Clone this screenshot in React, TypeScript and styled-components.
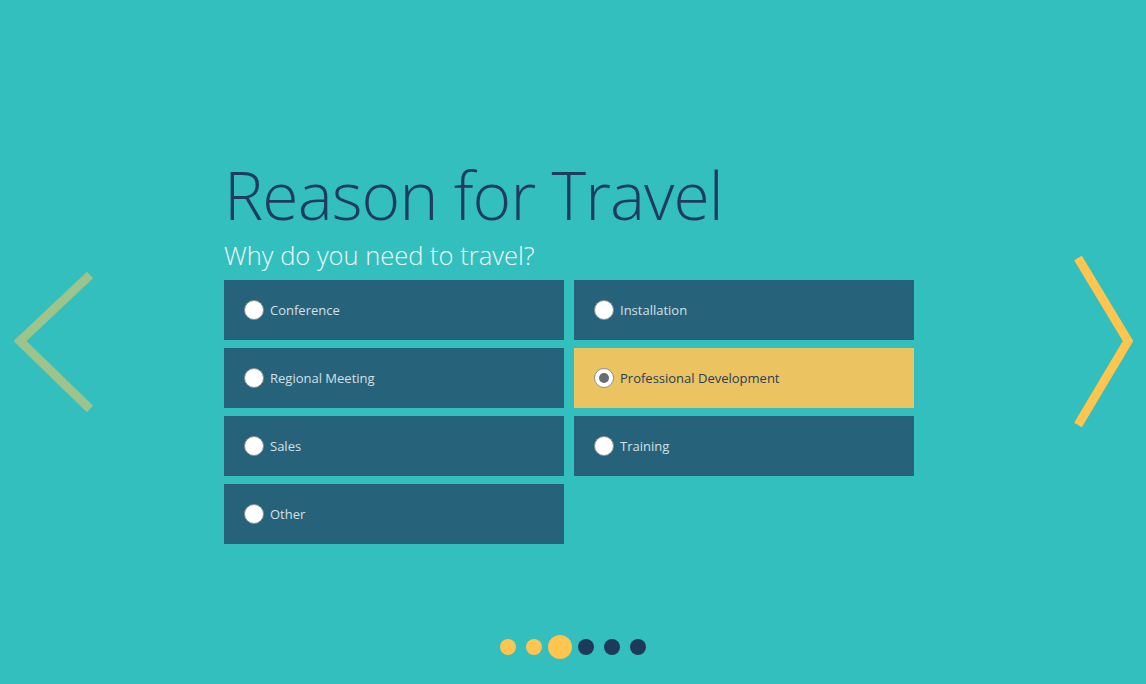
import React, { useState } from "react";
import styled, { createGlobalStyle } from "styled-components";

const Global = createGlobalStyle`
  html, body { margin: 0; padding: 0; }
  body { background: #34bfbf; font-family: "Open Sans", "Noto Sans", sans-serif; }
`;

const Page = styled.div`
  position: relative;
  width: 1146px;
  height: 684px;
  background: #34bfbf;
  display: flex;
  flex-direction: column;
  overflow: hidden;
`;

const Slide = styled.main`
  flex: 1;
  padding: 148px 0 0 224px;
  display: flex;
  flex-direction: column;
`;

const Title = styled.h1`
  margin: 0;
  font-family: "Open Sans", sans-serif;
  font-weight: 300;
  font-size: 66px;
  line-height: 92px;
  color: #1e3d5c;
  letter-spacing: -0.9px;
`;

const Subtitle = styled.h2`
  margin: 0 0 10px;
  font-family: "Open Sans", sans-serif;
  font-weight: 300;
  font-size: 25.5px;
  line-height: 30px;
  color: #eef6f6;
`;

const Grid = styled.div`
  display: grid;
  grid-template-columns: 340px 340px;
  grid-auto-rows: 60px;
  column-gap: 10px;
  row-gap: 8px;
`;

const Option = styled.label<{ $selected: boolean }>`
  display: flex;
  align-items: center;
  gap: 6px;
  padding-left: 20px;
  background: ${(p) => (p.$selected ? "#ebc461" : "#26627a")};
  color: ${(p) => (p.$selected ? "#233f5c" : "#d3e0e5")};
  font-size: 13px;
  cursor: pointer;
`;

const Radio = styled.span<{ $selected: boolean }>`
  box-sizing: border-box;
  width: 20px;
  height: 20px;
  border-radius: 50%;
  background: #ffffff;
  border: 1px solid #8a8f93;
  display: flex;
  align-items: center;
  justify-content: center;
  &::after {
    content: "";
    width: 10px;
    height: 10px;
    border-radius: 50%;
    background: #636e75;
    display: ${(p) => (p.$selected ? "block" : "none")};
  }
`;

const Arrow = styled.button<{ $side: "left" | "right" }>`
  position: absolute;
  ${(p) => (p.$side === "left" ? "left: 8px; top: 268px;" : "left: 1070px; top: 252px;")}
  border: 0;
  padding: 0;
  background: none;
  cursor: pointer;
  svg { display: block; }
`;

const Dots = styled.nav`
  display: flex;
  justify-content: center;
  align-items: center;
  height: 24px;
  padding-bottom: 25px;
`;

const DotSlot = styled.span`
  width: 26px;
  display: flex;
  justify-content: center;
`;

const Dot = styled.span<{ $active: boolean; $done: boolean }>`
  width: ${(p) => (p.$active ? 24 : 16)}px;
  height: ${(p) => (p.$active ? 24 : 16)}px;
  border-radius: 50%;
  background: ${(p) => (p.$active || p.$done ? "#ffc54f" : "#1e3a5a")};
`;

const options = [
  "Conference",
  "Installation",
  "Regional Meeting",
  "Professional Development",
  "Sales",
  "Training",
  "Other",
];

export default function App() {
  const [selected, setSelected] = useState("Professional Development");
  const current = 2;
  return (
    <Page>
      <Global />
      <Arrow $side="left" aria-label="Previous">
        <svg width="90" height="148" viewBox="0 0 90 148">
          <polyline points="82,7 12,73 82,141" fill="none" stroke="#9cc48b" strokeWidth="9" />
        </svg>
      </Arrow>
      <Slide>
        <Title>Reason for Travel</Title>
        <Subtitle>Why do you need to travel?</Subtitle>
        <Grid>
          {options.map((o) => (
            <Option key={o} $selected={selected === o} onClick={() => setSelected(o)}>
              <Radio $selected={selected === o} />
              {o}
            </Option>
          ))}
        </Grid>
      </Slide>
      <Arrow $side="right" aria-label="Next">
        <svg width="70" height="180" viewBox="0 0 70 180">
          <polyline points="8,6 58,89 8,173" fill="none" stroke="#ffc54f" strokeWidth="9" />
        </svg>
      </Arrow>
      <Dots>
        {[0, 1, 2, 3, 4, 5].map((i) => (
          <DotSlot key={i}>
            <Dot $active={i === current} $done={i < current} />
          </DotSlot>
        ))}
      </Dots>
    </Page>
  );
}
